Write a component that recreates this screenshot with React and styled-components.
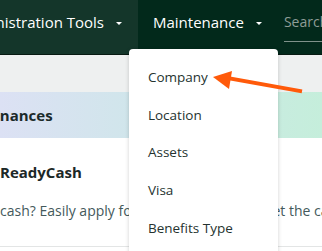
import React from 'react'
import styled, { createGlobalStyle } from 'styled-components'

const Global = createGlobalStyle`
  html, body {
    margin: 0;
    padding: 0;
    background: #ffffff;
    font-family: "Open Sans", "Noto Sans", sans-serif;
  }
`

const Page = styled.div`
  position: relative;
  width: 322px;
  height: 251px;
  overflow: hidden;
`

const Nav = styled.nav`
  display: flex;
  align-items: stretch;
  height: 54px;
  background: #02291b;
  border-bottom: 1px solid #071a12;
`

const NavItem = styled.div`
  position: relative;
  display: flex;
  align-items: center;
  justify-content: ${(p) => (p.$clip ? 'flex-end' : 'flex-start')};
  flex: 0 0 ${(p) => p.$width}px;
  box-sizing: border-box;
  padding: 0 16px 10px 15px;
  background: ${(p) => (p.$light ? '#14362a' : 'transparent')};
  color: #ffffff;
  font-size: 15px;
  font-weight: 500;
  white-space: nowrap;
  overflow: ${(p) => (p.$clip ? 'hidden' : 'visible')};
`

const Caret = styled.span`
  flex: none;
  margin-left: 12px;
  margin-top: 2px;
  width: 0;
  height: 0;
  border-left: 3px solid transparent;
  border-right: 3px solid transparent;
  border-top: 3px solid #ffffff;
`

const Search = styled.div`
  flex: 1;
  align-self: flex-start;
  height: 29px;
  margin: 12px 0 0 6px;
  line-height: 20px;
  border-bottom: 1px solid #7f918a;
  color: #8e9c97;
  font-size: 14px;
  white-space: nowrap;
  overflow: hidden;
`

const Menu = styled.ul`
  position: absolute;
  top: 49px;
  right: 0;
  width: 149px;
  height: 230px;
  margin: 0;
  padding: 9px 0 0;
  list-style: none;
  background: #ffffff;
  border-radius: 4px;
  box-shadow: 0 1px 4px rgba(0, 0, 0, 0.18);
  z-index: 2;
`

const MenuItem = styled.li`
  display: flex;
  align-items: center;
  height: 37.75px;
  padding-left: 19px;
  color: #25332f;
  font-size: 13.5px;
  font-weight: 400;
`

const SubBar = styled.div`
  height: 37px;
  background: #eef0f0;
`

const Banner = styled.div`
  display: flex;
  align-items: center;
  height: 46px;
  background: linear-gradient(90deg, #dce1f4 0%, #cfe6ea 45%, #c5eedb 100%);
  overflow: hidden;
`

const BannerTitle = styled.h2`
  margin: 0 0 0 -13px;
  font-size: 15px;
  font-weight: 700;
  color: #1b2a2a;
  white-space: nowrap;
`

const Card = styled.section`
  height: 109px;
  box-sizing: border-box;
  padding: 24px 0 0 0;
  border-bottom: 1px solid #e3e5e5;
  overflow: hidden;
`

const CardTitle = styled.h3`
  margin: 0;
  font-size: 15px;
  font-weight: 700;
  color: #1c2827;
`

const CardText = styled.p`
  margin: 19px 0 0;
  font-size: 14px;
  color: #44595b;
  white-space: nowrap;
`

const Pointer = styled.svg`
  position: absolute;
  left: 205px;
  top: 62px;
  z-index: 3;
`

export default function App() {
  return (
    <Page>
      <Global />
      <Nav>
        <NavItem $width={138} $light $clip>
          Administration Tools
          <Caret />
        </NavItem>
        <NavItem $width={139}>
          Maintenance
          <Caret />
          <Menu>
            <MenuItem>Company</MenuItem>
            <MenuItem>Location</MenuItem>
            <MenuItem>Assets</MenuItem>
            <MenuItem>Visa</MenuItem>
            <MenuItem>Benefits Type</MenuItem>
          </Menu>
        </NavItem>
        <Search>Search</Search>
      </Nav>
      <SubBar />
      <Banner>
        <BannerTitle>Finances</BannerTitle>
      </Banner>
      <Card>
        <CardTitle>ReadyCash</CardTitle>
        <CardText>cash? Easily apply for ReadyCash now to get the cash you need</CardText>
      </Card>
      <Pointer width="100" height="36" viewBox="0 0 100 36">
        <line x1="22" y1="16" x2="95" y2="29" stroke="#ff5a0a" strokeWidth="4" strokeLinecap="square" />
        <polygon points="8,15 27,9 24,27" fill="#ff5a0a" />
      </Pointer>
    </Page>
  )
}
